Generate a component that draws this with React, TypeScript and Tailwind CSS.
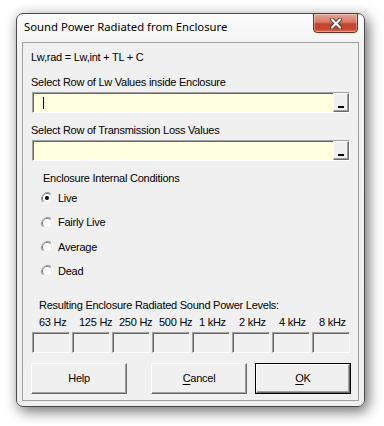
import React from "react";

const sunken =
  "border border-t-[#a0a0a0] border-l-[#a0a0a0] border-b-white border-r-white shadow-[inset_1px_1px_0_#696969]";
const raised =
  "border border-t-white border-l-white border-b-[#696969] border-r-[#696969] shadow-[inset_-1px_-1px_0_#a0a0a0]";

function Radio({ checked }: { checked?: boolean }) {
  return (
    <svg width="12" height="12" viewBox="0 0 12 12">
      <path d="M10.2 1.8 A6 6 0 0 0 1.8 10.2" fill="none" stroke="#a0a0a0" strokeWidth="1" />
      <path d="M1.8 10.2 A6 6 0 0 0 10.2 1.8" fill="none" stroke="#ffffff" strokeWidth="1" />
      <path d="M9.5 2.5 A5 5 0 0 0 2.5 9.5" fill="none" stroke="#696969" strokeWidth="1" />
      <path d="M2.5 9.5 A5 5 0 0 0 9.5 2.5" fill="none" stroke="#e3e3e3" strokeWidth="1" />
      <circle cx="6" cy="6" r="4" fill="#ffffff" />
      {checked && <circle cx="6" cy="6" r="2" fill="#000000" />}
    </svg>
  );
}

function RefInput({ cursor }: { cursor?: boolean }) {
  return (
    <div className={`ml-[9px] w-[318px] h-[21px] bg-[#ffffe1] flex ${sunken}`}>
      <div className="flex-1 flex items-center pl-[10px]">
        {cursor && <div className="w-px h-[12px] bg-black" />}
      </div>
      <div className={`w-[16px] h-full bg-[#f0f0f0] flex items-end justify-center pb-[3px] ${raised}`}>
        <div className="w-[6px] h-[2px] bg-black" />
      </div>
    </div>
  );
}

function Btn({ children, def }: { children: React.ReactNode; def?: boolean }) {
  return (
    <div className={`w-[96px] h-[31px] ${def ? "border border-black" : ""}`}>
      <div className={`w-full h-full bg-[#f0f0f0] flex items-center justify-center ${raised}`}>
        <span>{children}</span>
      </div>
    </div>
  );
}

export default function App() {
  const freqs = ["63 Hz", "125 Hz", "250 Hz", "500 Hz", "1 kHz", "2 kHz", "4 kHz", "8 kHz"];
  const radios = ["Live", "Fairly Live", "Average", "Dead"];
  return (
    <div className="w-[384px] h-[426px] bg-white pt-[13px] pl-[16px] overflow-hidden">
      <div className="w-[349px] h-[394px] rounded-[7px] border border-[#4a4a4a] bg-[linear-gradient(#fbfbfb,#f1f1f1_40px,#efefef)] shadow-[3px_4px_14px_rgba(0,0,0,0.6)] flex flex-col px-[5px] pb-[5px]">
        <div className="h-[28px] flex items-start">
          <div
            className="pt-[6px] pl-[2px] text-[11.3px] leading-[14px] text-black"
            style={{ fontFamily: '"Noto Sans", "Open Sans", sans-serif' }}
          >
            Sound Power Radiated from Enclosure
          </div>
          <div className="ml-auto -mt-px mr-[1px] w-[45px] h-[20px] rounded-b-[4px] border border-[#7d2a1d] bg-[linear-gradient(#e9a596,#d47a66_45%,#c3442f_55%,#c8472f_85%,#dd7a5c)] shadow-[inset_0_0_0_1px_rgba(255,255,255,0.35)] flex items-center justify-center">
            <svg width="12" height="11" viewBox="0 0 12 11">
              <path d="M2 1.5 L10 9.5 M10 1.5 L2 9.5" stroke="#5a3a36" strokeWidth="4" strokeLinecap="round" />
              <path d="M2 1.5 L10 9.5 M10 1.5 L2 9.5" stroke="#ffffff" strokeWidth="2.2" strokeLinecap="round" />
            </svg>
          </div>
        </div>
        <div
          className="flex-1 border border-[#a0a0a0] bg-[#f0f0f0] flex flex-col text-[11px] leading-[13px] tracking-[-0.25px] text-black"
          style={{ fontFamily: '"Liberation Sans", Arial, sans-serif' }}
        >
          <div className="mt-[8px] pl-[8px]">Lw,rad = Lw,int + TL + C</div>
          <div className="mt-[12px] pl-[8px]">Select Row of Lw Values inside Enclosure</div>
          <div className="mt-[3px]">
            <RefInput cursor />
          </div>
          <div className="mt-[11px] pl-[8px]">Select Row of Transmission Loss Values</div>
          <div className="mt-[3px]">
            <RefInput />
          </div>
          <div className="mt-[11px] pl-[20px]">Enclosure Internal Conditions</div>
          <div className="mt-[1px] flex flex-col pl-[18px]">
            <div className="h-[24px] flex items-center">
              <Radio checked />
              <span className="ml-[5px]">{radios[0]}</span>
            </div>
            <div className="h-[25px] flex items-center">
              <Radio />
              <span className="ml-[5px]">{radios[1]}</span>
            </div>
            <div className="h-[24px] flex items-center">
              <Radio />
              <span className="ml-[5px]">{radios[2]}</span>
            </div>
            <div className="h-[24px] flex items-center">
              <Radio />
              <span className="ml-[5px]">{radios[3]}</span>
            </div>
          </div>
          <div className="mt-[16px] pl-[16px]">Resulting Enclosure Radiated Sound Power Levels:</div>
          <div className="mt-[4px] ml-[9px] grid grid-cols-[repeat(8,40px)]">
            {freqs.map((f) => (
              <div key={f} className="pl-[7px] whitespace-nowrap">
                {f}
              </div>
            ))}
          </div>
          <div className="mt-[3px] ml-[9px] grid grid-cols-[repeat(8,40px)]">
            {freqs.map((f) => (
              <div key={f} className={`w-[38px] h-[21px] bg-[#f0f0f0] ${sunken}`} />
            ))}
          </div>
          <div className="mt-[10px] ml-[8px] flex">
            <Btn>Help</Btn>
            <div className="ml-[24px]">
              <Btn>
                <span className="underline underline-offset-2">C</span>ancel
              </Btn>
            </div>
            <div className="ml-[8px]">
              <Btn def>
                <span className="underline underline-offset-2">O</span>K
              </Btn>
            </div>
          </div>
        </div>
      </div>
    </div>
  );
}
